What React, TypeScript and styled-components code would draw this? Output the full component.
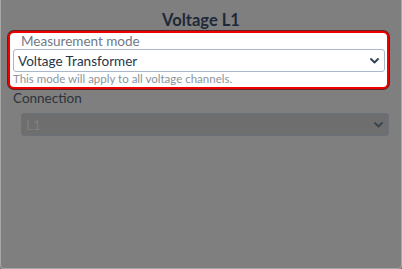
import React from "react";
import styled, { createGlobalStyle } from "styled-components";

const GlobalStyle = createGlobalStyle`
  html, body {
    margin: 0;
    padding: 0;
    background: #ffffff;
  }
  body {
    font-family: Lato, "Noto Sans", sans-serif;
  }
`;

const Frame = styled.div`
  position: relative;
  width: 402px;
  height: 269px;
  box-sizing: border-box;
  background: #ffffff;
  overflow: hidden;
`;

const FrameEdge = styled.div`
  position: absolute;
  inset: -4px 0 0 0;
  border: 1px solid #a7a7a7;
  border-radius: 4px;
  pointer-events: none;
  z-index: 3;
`;

const Dialog = styled.div`
  display: flex;
  flex-direction: column;
  padding: 11px 13px 0 8px;
`;

const Title = styled.h2`
  margin: 0 0 1px 0;
  text-align: center;
  font-size: 16.5px;
  font-weight: 700;
  line-height: 19px;
  color: #3d5270;
  padding-left: 5px;
`;

const Overlay = styled.div`
  position: absolute;
  inset: 0;
  background: rgba(0, 0, 0, 0.5);
  z-index: 1;
`;

const Spotlight = styled.div`
  position: relative;
  z-index: 2;
  background: #ffffff;
  border: 2px solid #ee0000;
  border-radius: 6px;
  box-shadow: 0 0 0 1px #6a2020;
  padding: 0 2px 2px 3px;
  display: flex;
  flex-direction: column;
`;

const Label = styled.label<{ $indent?: number; $color?: string }>`
  display: block;
  font-size: 13.5px;
  line-height: 16px;
  color: ${(p) => p.$color || "#6f7985"};
  padding-left: ${(p) => p.$indent || 0}px;
`;

const SelectBox = styled.div<{ $disabled?: boolean; $indent?: number; $gap?: number }>`
  display: flex;
  align-items: center;
  justify-content: space-between;
  height: 23px;
  box-sizing: border-box;
  margin-left: ${(p) => p.$indent || 0}px;
  margin-top: ${(p) => p.$gap || 0}px;
  padding: 0 5px 0 4px;
  border: 1px solid ${(p) => (p.$disabled ? "#d4e2f0" : "#a8b8ca")};
  border-radius: 3px;
  background: ${(p) => (p.$disabled ? "#dcdcdc" : "#ffffff")};
  color: ${(p) => (p.$disabled ? "#ffffff" : "#26364a")};
  font-size: 13.5px;
`;

const Help = styled.div`
  font-size: 11.5px;
  line-height: 12px;
  margin-top: 1px;
  color: #8c949c;
`;

const Group = styled.div`
  display: flex;
  flex-direction: column;
  padding-left: 5px;
  margin-top: 1px;
`;

const Chevron: React.FC<{ color: string }> = ({ color }) => (
  <svg width="9" height="6" viewBox="0 0 9 6">
    <path
      d="M1 1 L4.5 4.5 L8 1"
      fill="none"
      stroke={color}
      strokeWidth="1.8"
      strokeLinecap="round"
      strokeLinejoin="round"
    />
  </svg>
);

export default function App() {
  return (
    <>
      <GlobalStyle />
      <Frame>
        <Dialog>
          <Title>Voltage L1</Title>
          <Spotlight>
            <Label $indent={8}>Measurement mode</Label>
            <SelectBox>
              <span>Voltage Transformer</span>
              <Chevron color="#2f3f55" />
            </SelectBox>
            <Help>This mode will apply to all voltage channels.</Help>
          </Spotlight>
          <Group>
            <Label $color="#5a6777">Connection</Label>
            <SelectBox $disabled $indent={8} $gap={7}>
              <span>L1</span>
              <Chevron color="#76879f" />
            </SelectBox>
          </Group>
        </Dialog>
        <Overlay />
        <FrameEdge />
      </Frame>
    </>
  );
}
